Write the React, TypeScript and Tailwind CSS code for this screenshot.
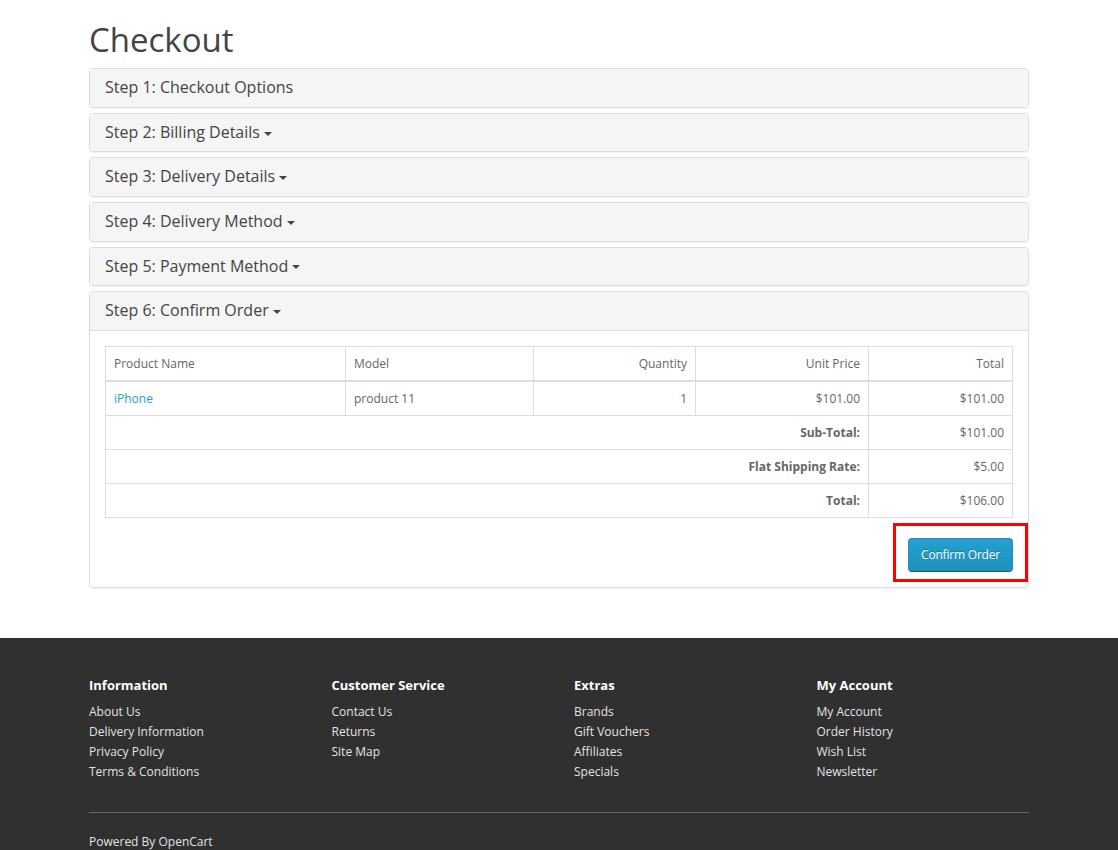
import React from 'react';

const STEPS = [
    { n: 1, title: 'Checkout Options', caret: false },
    { n: 2, title: 'Billing Details', caret: true },
    { n: 3, title: 'Delivery Details', caret: true },
    { n: 4, title: 'Delivery Method', caret: true },
    { n: 5, title: 'Payment Method', caret: true },
];

const TOTALS = [
    { label: 'Sub-Total:', value: '$101.00' },
    { label: 'Flat Shipping Rate:', value: '$5.00' },
    { label: 'Total:', value: '$106.00' },
];

const FOOTER = [
    { title: 'Information', links: ['About Us', 'Delivery Information', 'Privacy Policy', 'Terms & Conditions'] },
    { title: 'Customer Service', links: ['Contact Us', 'Returns', 'Site Map'] },
    { title: 'Extras', links: ['Brands', 'Gift Vouchers', 'Affiliates', 'Specials'] },
    { title: 'My Account', links: ['My Account', 'Order History', 'Wish List', 'Newsletter'] },
];

const Caret = () => (
    <span className="inline-block ml-[4px] align-middle w-0 h-0 border-x-[4px] border-x-transparent border-t-[4px] border-t-[#444]"></span>
);

const PanelHeading = ({ n, title, caret }: { n: number; title: string; caret: boolean }) => (
    <div className="bg-[#f5f5f5] border-b border-[#ddd] px-[15px] py-[10px] rounded-t-[3px]">
        <h4 className="text-[16px] leading-[1.1] text-[#444]">
            Step {n}: {title}
            {caret && <Caret />}
        </h4>
    </div>
);

const Checkout: React.FC = () => {
    const cell = 'border border-[#ddd] px-[8px] py-[8px] leading-[17px]';

    return (
        <div className="min-h-screen bg-white text-[12px] text-[#666]" style={{ fontFamily: '"Open Sans", "DejaVu Sans", sans-serif' }}>
            <div className="w-[940px] mx-auto">
                <h1 className="text-[33px] leading-[1.1] text-[#444] mt-[22px] mb-[10px]">Checkout</h1>

                <div className="flex flex-col gap-[5px] mb-[50px]">
                    {STEPS.map(s => (
                        <div key={s.n} className="border border-[#ddd] rounded-[4px] overflow-hidden shadow-[0_1px_1px_rgba(0,0,0,0.05)]">
                            <div className="bg-[#f5f5f5] px-[15px] py-[10px]">
                                <h4 className="text-[16px] leading-[1.1] text-[#444]">
                                    Step {s.n}: {s.title}
                                    {s.caret && <Caret />}
                                </h4>
                            </div>
                        </div>
                    ))}

                    {/* Step 6 expanded */}
                    <div className="border border-[#ddd] rounded-[4px] overflow-hidden shadow-[0_1px_1px_rgba(0,0,0,0.05)]">
                        <PanelHeading n={6} title="Confirm Order" caret />
                        <div className="p-[15px]">
                            <table className="w-full border-collapse mb-[20px]">
                                <thead>
                                    <tr>
                                        <td className={`${cell} border-b-2 w-[240px]`}>Product Name</td>
                                        <td className={`${cell} border-b-2 w-[188px]`}>Model</td>
                                        <td className={`${cell} border-b-2 text-right w-[162px]`}>Quantity</td>
                                        <td className={`${cell} border-b-2 text-right w-[173px]`}>Unit Price</td>
                                        <td className={`${cell} border-b-2 text-right`}>Total</td>
                                    </tr>
                                </thead>
                                <tbody>
                                    <tr>
                                        <td className={cell}><a href="#" className="text-[#23a1d1]">iPhone</a></td>
                                        <td className={cell}>product 11</td>
                                        <td className={`${cell} text-right`}>1</td>
                                        <td className={`${cell} text-right`}>$101.00</td>
                                        <td className={`${cell} text-right`}>$101.00</td>
                                    </tr>
                                    {TOTALS.map(t => (
                                        <tr key={t.label}>
                                            <td colSpan={4} className={`${cell} text-right font-bold`}>{t.label}</td>
                                            <td className={`${cell} text-right`}>{t.value}</td>
                                        </tr>
                                    ))}
                                </tbody>
                            </table>

                            <div className="flex justify-end">
                                <div className="relative">
                                    <button className="px-[12px] py-[7.5px] leading-[17px] text-[12px] tracking-[-0.2px] text-white rounded-[4px] border border-[#1f90bb] border-b-[#145e7a] bg-gradient-to-b from-[#23a1d1] to-[#1f90bb] [text-shadow:0_-1px_0_rgba(0,0,0,0.25)]">
                                        Confirm Order
                                    </button>
                                    {/* highlight box */}
                                    <div className="absolute -left-[15px] -right-[15px] -top-[15px] -bottom-[10px] border-[3px] border-[#ff0000] pointer-events-none"></div>
                                </div>
                            </div>
                        </div>
                    </div>
                </div>
            </div>

            <footer className="bg-[#303030] text-[#e2e2e2] pt-[30px] pb-[20px]">
                <div className="w-[940px] mx-auto">
                    <div className="grid grid-cols-4 gap-[30px]">
                        {FOOTER.map(col => (
                            <div key={col.title}>
                                <h5 className="text-[13px] font-bold text-white mt-[8px] mb-[8px] leading-[18px]">{col.title}</h5>
                                <ul className="mb-[10px]">
                                    {col.links.map(l => (
                                        <li key={l} className="leading-[20px]"><a href="#">{l}</a></li>
                                    ))}
                                </ul>
                            </div>
                        ))}
                    </div>
                    <hr className="border-0 border-t border-[#666] my-[20px]" />
                    <p className="leading-[17px] mt-[15px]">Powered By <a href="#">OpenCart</a></p>
                </div>
            </footer>
        </div>
    );
};

export default Checkout;
